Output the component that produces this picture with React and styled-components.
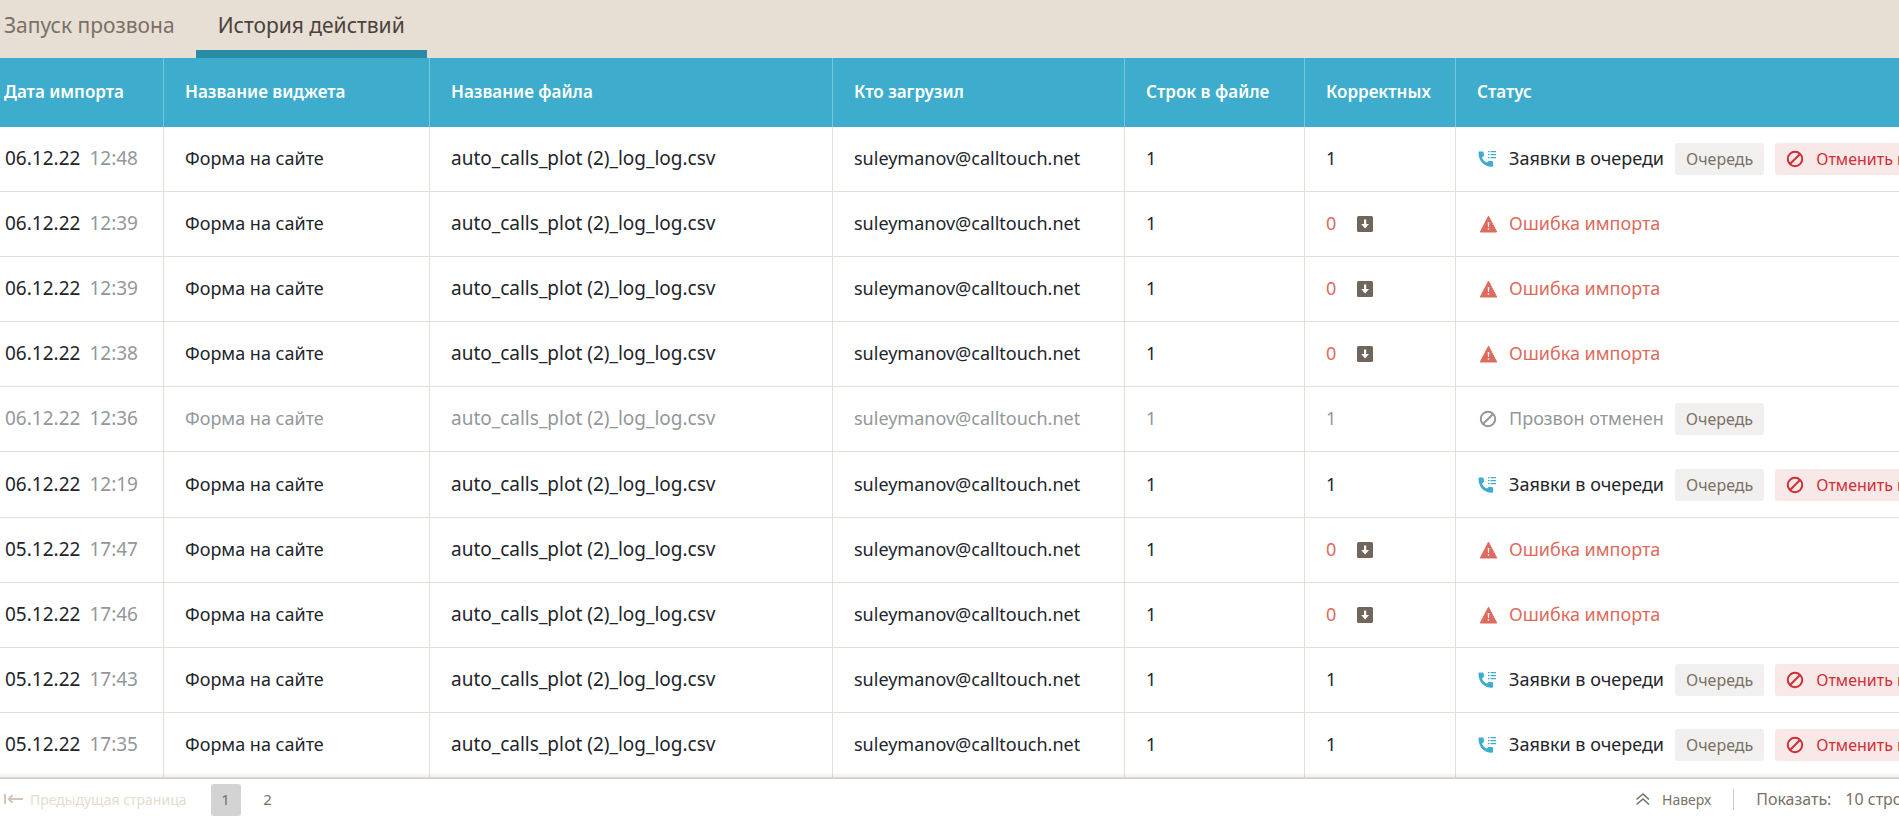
import React, { useState } from "react";
import styled, { createGlobalStyle, css } from "styled-components";

const color = {
  sand: "#e7ded4",
  line: "#e6ded5",
  accent: "#3eadcd",
  accentDark: "#2a8ba5",
  text: "#22252b",
  muted: "#93979a",
  brown: "#7b7067",
  error: "#dd6a5c",
  danger: "#cf2f35",
};

const GlobalStyle = createGlobalStyle`
  *, *::before, *::after { box-sizing: border-box; }
  body { margin: 0; background: #fff; }
  body, button, select { font-family: "Noto Sans", "Open Sans", sans-serif; }
  button, select { border: 0; margin: 0; padding: 0; background: none; cursor: pointer; }
`;

const Page = styled.div`
  display: flex;
  flex-direction: column;
  height: 100vh;
  overflow: hidden;
  color: ${color.text};
`;

const Tabs = styled.nav`
  display: flex;
  flex: none;
  height: 58px;
  background: ${color.sand};
`;

const Tab = styled.button`
  padding: 0 21px;
  border-bottom: 8px solid transparent;
  font-size: 21px;
  line-height: 28px;
  white-space: nowrap;
  color: ${color.brown};

  &:first-child {
    padding-left: 4px;
  }

  ${(p) =>
    p.$active &&
    css`
      padding: 0 22px;
      color: #4a433d;
      border-bottom-color: ${color.accentDark};
    `}
`;

const TableArea = styled.main`
  flex: 1;
  min-height: 0;
  overflow: hidden auto;
`;

const Table = styled.table`
  width: 100%;
  height: 100%;
  table-layout: fixed;
  border-collapse: separate;
  border-spacing: 0;
  font-size: 18px;
  line-height: 24px;
`;

const Col = styled.col`
  width: ${(p) => p.$width};
`;

const HeadCell = styled.th`
  height: 69px;
  padding: 0 0 2px 21px;
  border-right: 1px solid #7ac5dc;
  background: ${color.accent};
  color: #fff;
  font-size: 17px;
  font-weight: 600;
  text-align: left;
  white-space: nowrap;

  &:first-child {
    padding-left: 4px;
  }
  &:last-child {
    border-right: 0;
  }
`;

const Row = styled.tr`
  color: ${(p) => (p.$muted ? color.muted : "inherit")};
`;

const Cell = styled.td`
  height: 65px;
  padding: 0 0 2px 21px;
  border-right: 1px solid ${color.line};
  border-bottom: 1px solid ${color.line};
  overflow: hidden;
  white-space: nowrap;
  font-size: ${(p) => (p.$large ? "19px" : "18px")};

  &:first-child {
    padding-left: 5px;
  }
  &:last-child {
    padding-bottom: 0;
    border-right: 0;
  }
`;

const Time = styled.span`
  margin-left: 9px;
  color: ${color.muted};
`;

const Count = styled.div`
  display: flex;
  align-items: center;
  gap: 21px;
  color: ${(p) => (p.$error ? color.error : "inherit")};
`;

const IconButton = styled.button`
  display: flex;
  padding-top: 2px;
`;

const Status = styled.div`
  display: flex;
  align-items: center;
  color: ${(p) => (p.$error ? color.error : "inherit")};
`;

const StatusIcon = styled.span`
  display: flex;
  flex: none;
  width: 32px;
  padding-left: 1px;
`;

const StatusText = styled.span`
  padding-bottom: 2px;
`;

const Tag = styled.span`
  flex: none;
  margin-left: 11px;
  padding: 0 11px;
  border-radius: 3px;
  background: #f1f0ee;
  color: ${color.brown};
  font-size: 16px;
  line-height: 32px;
`;

const CancelButton = styled.button`
  display: flex;
  flex: none;
  align-items: center;
  gap: 12px;
  margin-left: 11px;
  padding: 0 11px;
  border-radius: 3px;
  background: #f9e8e8;
  color: ${color.danger};
  font-size: 16px;
  line-height: 32px;
`;

const Footer = styled.footer`
  position: relative;
  display: flex;
  flex: none;
  justify-content: space-between;
  height: 38px;
  padding: 5px 0 0 4px;
  border-top: 1px solid #d8cfc6;
  box-shadow: 0 -4px 0 rgba(0, 0, 0, 0.045);
  background: #fff;
  color: ${color.brown};
  font-size: 16px;
  line-height: 30px;
`;

const Pager = styled.nav`
  display: flex;
  align-items: center;
  gap: 12px;
  height: 32px;
`;

const PrevButton = styled.button`
  display: flex;
  align-items: center;
  gap: 6px;
  margin-right: 12px;
  padding-bottom: 2px;
  color: #e5dccd;
  font-size: 14px;
`;

const PageButton = styled.button`
  width: 30px;
  height: 32px;
  padding-bottom: 2px;
  border-radius: 3px;
  background: ${(p) => (p.$active ? "#d3d3d3" : "transparent")};
  color: ${color.brown};
  font-size: 15px;
`;

const Tools = styled.div`
  display: flex;
  flex: 0 0 264px;
  align-items: center;
  min-width: 0;
  height: 30px;
  white-space: nowrap;
`;

const TopLink = styled.a`
  display: flex;
  align-items: center;
  gap: 12px;
  padding-right: 22px;
  border-right: 1px solid #cfcac5;
  color: inherit;
  font-size: 14px;
  line-height: 21px;
  text-decoration: none;
`;

const SizeLabel = styled.label`
  margin: 0 14px 0 22px;
`;

const SizeSelect = styled.select`
  appearance: none;
  flex: none;
  color: inherit;
  font-size: 16px;
`;

const QueueIcon = () => (
  <svg width="20" height="18" viewBox="0 0 20 18" fill={color.accent} aria-hidden="true">
    <path d="M1.500 1.500h3.200c.5 0 .8.3.9.8l.4 2.800c.1.400 0 .7-.3.900L4 7.700c1.100 2.200 2.700 3.900 5 4.900l1.700-1.600c.3-.3.600-.4 1-.3l2.700.5c.4.1.7.4.7.9v3.300c0 .9-.6 1.400-1.500 1.400C6.400 16.800.5 11 .5 3c0-.9.3-1.500 1-1.500z" />
    <path d="M10 1h1.500v1.200H10zM10 4h1.500v1.200H10zM10 7h1.500v1.200H10zM12.500 1H18v1.200h-5.500zM12.500 4H18v1.200h-5.500zM12.500 7H18v1.200h-5.500z" />
  </svg>
);

const WarningIcon = () => (
  <svg width="20" height="18" viewBox="0 0 20 18" aria-hidden="true">
    <path d="M10.500 1.200L18.700 17H2.300z" fill={color.error} stroke={color.error} strokeWidth="1" strokeLinejoin="round" />
    <path d="M9.700 7h1.600l-.3 5h-1zM9.800 13.200h1.400v1.500H9.800z" fill="#fff" />
  </svg>
);

const BanIcon = ({ width = 18 }) => (
  <svg width={width} height="18" viewBox={`0 0 ${width} 18`} fill="none" stroke="currentColor" strokeWidth="2" aria-hidden="true">
    <circle cx={width - 9} cy="9" r="7.200" />
    <path d={`M${width - 14} 14l10-10`} />
  </svg>
);

const DownloadIcon = () => (
  <svg width="16" height="16" viewBox="0 0 16 16" aria-hidden="true">
    <rect width="16" height="16" rx="1.500" fill="#70665c" />
    <path d="M7 3.500h2.200V8H12l-3.900 4.500L4.200 8H7z" fill="#fff" />
  </svg>
);

const PrevIcon = () => (
  <svg width="20" height="12" viewBox="0 0 20 12" fill="none" stroke="#d2c6b8" strokeWidth="2" aria-hidden="true">
    <path d="M1 1v10M4.500 6H19M8.500 2.200L4.700 6l3.800 3.800" />
  </svg>
);

const TopIcon = () => (
  <svg width="15" height="14" viewBox="0 0 15 14" fill="none" stroke="currentColor" strokeWidth="1.600" aria-hidden="true">
    <path d="M1.500 7.500L8 2l6 5.500M1.500 12.500L8 7l6 5.500" />
  </svg>
);

const columns = [
  ["Дата импорта", "164px"],
  ["Название виджета", "266px"],
  ["Название файла", "403px"],
  ["Кто загрузил", "292px"],
  ["Строк в файле", "180px"],
  ["Корректных", "151px"],
  ["Статус", "auto"],
];

const rows = [
  ["06.12.22", "12:48", "queue"],
  ["06.12.22", "12:39", "error"],
  ["06.12.22", "12:39", "error"],
  ["06.12.22", "12:38", "error"],
  ["06.12.22", "12:36", "cancelled"],
  ["06.12.22", "12:19", "queue"],
  ["05.12.22", "17:47", "error"],
  ["05.12.22", "17:46", "error"],
  ["05.12.22", "17:43", "queue"],
  ["05.12.22", "17:35", "queue"],
];

const statuses = {
  queue: { icon: <QueueIcon />, label: "Заявки в очереди", tag: true, cancel: true },
  error: { icon: <WarningIcon />, label: "Ошибка импорта" },
  cancelled: { icon: <BanIcon width={19} />, label: "Прозвон отменен", tag: true },
};

function HistoryRow({ date, time, state }) {
  const status = statuses[state];
  const failed = state === "error";
  return (
    <Row $muted={state === "cancelled"}>
      <Cell $large>
        {date}
        <Time>{time}</Time>
      </Cell>
      <Cell>Форма на сайте</Cell>
      <Cell $large>auto_calls_plot (2)_log_log.csv</Cell>
      <Cell>suleymanov@calltouch.net</Cell>
      <Cell>1</Cell>
      <Cell>
        <Count $error={failed}>
          {failed ? "0" : "1"}
          {failed && (
            <IconButton type="button" aria-label="Скачать">
              <DownloadIcon />
            </IconButton>
          )}
        </Count>
      </Cell>
      <Cell>
        <Status $error={failed}>
          <StatusIcon>{status.icon}</StatusIcon>
          <StatusText>{status.label}</StatusText>
          {status.tag && <Tag>Очередь</Tag>}
          {status.cancel && (
            <CancelButton type="button">
              <BanIcon />
              Отменить прозвон
            </CancelButton>
          )}
        </Status>
      </Cell>
    </Row>
  );
}

export default function App() {
  const [tab, setTab] = useState(1);
  const [page, setPage] = useState(1);

  return (
    <Page id="top">
      <GlobalStyle />
      <Tabs>
        {["Запуск прозвона", "История действий"].map((name, i) => (
          <Tab key={name} type="button" $active={tab === i} onClick={() => setTab(i)}>
            {name}
          </Tab>
        ))}
      </Tabs>
      <TableArea>
        <Table>
          <colgroup>
            {columns.map(([name, width]) => (
              <Col key={name} $width={width} />
            ))}
          </colgroup>
          <thead>
            <tr>
              {columns.map(([name]) => (
                <HeadCell key={name} scope="col">
                  {name}
                </HeadCell>
              ))}
            </tr>
          </thead>
          <tbody>
            {rows.map(([date, time, state], i) => (
              <HistoryRow key={i} date={date} time={time} state={state} />
            ))}
          </tbody>
        </Table>
      </TableArea>
      <Footer>
        <Pager>
          <PrevButton type="button">
            <PrevIcon />
            Предыдущая страница
          </PrevButton>
          {[1, 2].map((n) => (
            <PageButton key={n} type="button" $active={page === n} onClick={() => setPage(n)}>
              {n}
            </PageButton>
          ))}
        </Pager>
        <Tools>
          <TopLink href="#top">
            <TopIcon />
            Наверх
          </TopLink>
          <SizeLabel htmlFor="page-size">Показать:</SizeLabel>
          <SizeSelect id="page-size" defaultValue="10">
            <option value="10">10 строк</option>
            <option value="20">20 строк</option>
          </SizeSelect>
        </Tools>
      </Footer>
    </Page>
  );
}
